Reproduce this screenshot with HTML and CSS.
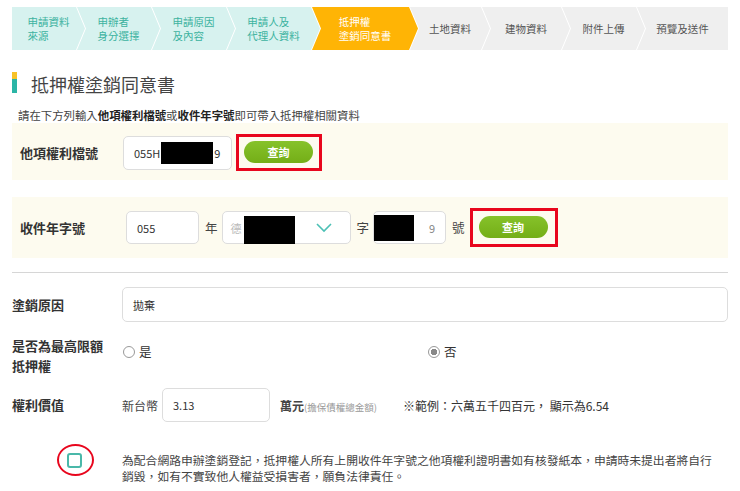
FILE: index.html
```html
<!DOCTYPE html>
<html lang="zh-Hant">
<head>
  <meta charset="UTF-8">
  <title>抵押權塗銷同意書</title>
  <link rel="stylesheet" href="styles.css">
</head>
<body>
  <div class="page">
    <ol class="steps">
      <li class="step done first"><span>申請資料<br>來源</span></li>
      <li class="step done"><span>申辦者<br>身分選擇</span></li>
      <li class="step done"><span>申請原因<br>及內容</span></li>
      <li class="step done"><span>申請人及<br>代理人資料</span></li>
      <li class="step active"><span>抵押權<br>塗銷同意書</span></li>
      <li class="step"><span>土地資料</span></li>
      <li class="step"><span>建物資料</span></li>
      <li class="step"><span>附件上傳</span></li>
      <li class="step last"><span>預覽及送件</span></li>
    </ol>

    <h2 class="title">抵押權塗銷同意書</h2>
    <p class="hint">請在下方列輸入<b>他項權利檔號</b>或<b>收件年字號</b>即可帶入抵押權相關資料</p>

    <div class="query">
      <span class="q-label">他項權利檔號</span>
      <div class="box box-no">055H<span class="mask mask-no"></span>9</div>
      <span class="mark"><button class="btn">查詢</button></span>
    </div>

    <div class="query query-second">
      <span class="q-label">收件年字號</span>
      <div class="box box-year">055</div>
      <span class="unit">年</span>
      <div class="box box-select">
        <span class="faint">德</span><span class="mask mask-sel"></span>
        <svg class="caret" width="16" height="10" viewBox="0 0 16 10"><polyline points="1,1 8,8 15,1" fill="none" stroke="#4cc0b5" stroke-width="1.6"/></svg>
      </div>
      <span class="unit">字</span>
      <div class="box box-num"><span class="mask mask-num"></span><span class="faint-nine">9</span></div>
      <span class="unit">號</span>
      <span class="mark mark-second"><button class="btn">查詢</button></span>
    </div>

    <hr class="divider">

    <div class="row">
      <span class="label">塗銷原因</span>
      <div class="box box-wide">拋棄</div>
    </div>

    <div class="row row-radio">
      <span class="label">是否為最高限額<br>抵押權</span>
      <div class="choices">
        <span class="choice"><span class="radio"></span>是</span>
        <span class="choice"><span class="radio on"></span>否</span>
      </div>
    </div>

    <div class="row row-money">
      <span class="label">權利價值</span>
      <span class="pre">新台幣</span>
      <div class="box box-money">3.13</div>
      <span class="money-unit">萬元<small>(擔保債權總金額)</small></span>
      <span class="example">※範例：六萬五千四百元， 顯示為6.54</span>
    </div>

    <div class="agree">
      <div class="check-cell">
        <span class="check"></span>
        <span class="circle"></span>
      </div>
      <p class="agree-text">為配合網路申辦塗銷登記，抵押權人所有上開收件年字號之他項權利證明書如有核發紙本，申請時未提出者將自行<br>銷毀，如有不實致他人權益受損害者，願負法律責任。</p>
    </div>
  </div>
</body>
</html>
```

FILE: styles.css
```css
body {
  margin: 0;
  background: #fff;
  color: #333;
  font-family: "Noto Sans CJK TC", "Noto Sans", sans-serif;
}

.page {
  width: 716px;
  padding: 7px 12px 0;
}

/* stepper */
.steps {
  display: flex;
  margin: 0;
  padding: 0;
  list-style: none;
  height: 43px;
}

.step {
  display: flex;
  align-items: center;
  justify-content: center;
  margin-left: -8px;
  background: #efefef;
  color: #555;
  font-size: 10.5px;
  line-height: 14px;
  clip-path: polygon(0 0, calc(100% - 9px) 0, 100% 50%, calc(100% - 9px) 100%, 0 100%, 9px 50%);
}

.step span {
  text-align: left;
}

.step.done {
  background: #d7f2ef;
  color: #3db3a0;
}

.step.active {
  background: #ffb405;
  color: #fff;
}

.step.first {
  margin-left: 0;
  clip-path: polygon(0 0, calc(100% - 9px) 0, 100% 50%, calc(100% - 9px) 100%, 0 100%);
}

.step.last {
  clip-path: polygon(0 0, 100% 0, 100% 100%, 0 100%, 9px 50%);
}

.step:nth-child(1) { width: 73px; }
.step:nth-child(2) { width: 83px; }
.step:nth-child(3) { width: 83px; }
.step:nth-child(4) { width: 93px; }
.step:nth-child(5) { width: 106px; }
.step:nth-child(6) { width: 80px; }
.step:nth-child(7) { width: 88px; }
.step:nth-child(8) { width: 83px; }
.step:nth-child(9) { width: 91px; }

/* title */
.title {
  margin: 22px 0 0;
  padding-left: 19px;
  position: relative;
  font-size: 18px;
  font-weight: 400;
  line-height: 24px;
  color: #444;
}

.title::before {
  content: "";
  position: absolute;
  left: 0;
  top: 0;
  width: 5px;
  height: 21px;
  background: linear-gradient(#f8c227 0, #f8c227 33%, #2bb5a6 33%);
}

.hint {
  margin: 11px 0 0 6px;
  font-size: 11.4px;
  line-height: 16px;
  color: #444;
}

.hint b {
  color: #222;
}

/* query blocks */
.query {
  display: flex;
  align-items: center;
  padding: 11px 8px 9px;
  background: #fdfbef;
}

.query-second {
  margin-top: 17px;
  padding: 11px 8px 11px;
}

.q-label {
  width: 103px;
  font-size: 13px;
  font-weight: 700;
  color: #333;
}

.query-second .q-label {
  width: 106px;
}

.box {
  display: flex;
  align-items: center;
  box-sizing: border-box;
  height: 34px;
  padding: 0 10px;
  background: #fff;
  border: 1px solid #ddd;
  border-radius: 5px;
  font-size: 11px;
  color: #333;
}

.box-no {
  width: 109px;
  margin-right: 4px;
}

.mask {
  display: inline-block;
  background: #000;
}

.mask-no {
  width: 52px;
  height: 22px;
  margin: 0 1px;
}

.box-year {
  width: 73px;
  height: 33px;
}

.unit {
  margin: 0 4px 0 6px;
  font-size: 12.5px;
  color: #444;
}

.box-select {
  position: relative;
  width: 129px;
  height: 33px;
  padding-left: 8px;
}

.faint {
  color: #bbb;
  margin-right: 2px;
}

.mask-sel {
  width: 51px;
  height: 28px;
  margin-top: 4px;
}

.caret {
  margin-left: auto;
  margin-right: 8px;
}

.box-num {
  width: 73px;
  height: 33px;
  padding-left: 0;
}

.mask-num {
  width: 42px;
  height: 26px;
}

.faint-nine {
  margin-left: 15px;
  color: #888;
}

.mark {
  padding: 4px 6px 5px 5px;
  border: 3px solid #e8061d;
}

.mark-second {
  margin-left: 1px;
  padding: 5px 7px 6px 6px;
}

.btn {
  display: block;
  width: 69px;
  height: 22px;
  border: 0;
  border-radius: 11px;
  background: linear-gradient(#86c22a, #74ae17);
  color: #fff;
  font-family: inherit;
  font-size: 11px;
  font-weight: 700;
  padding: 0;
}

.divider {
  margin: 14px 0 0;
  border: 0;
  border-top: 1px solid #d6d6d6;
}

/* form rows */
.row {
  display: flex;
  align-items: center;
  margin-top: 14px;
}

.label {
  width: 110px;
  flex: none;
  font-size: 13px;
  font-weight: 700;
  line-height: 20px;
  color: #333;
}

.box-wide {
  flex: 1;
  height: 35px;
}

.row-radio {
  margin-top: 14px;
  align-items: flex-start;
}

.choices {
  flex: 1;
  display: grid;
  grid-template-columns: 1fr 1fr;
  padding-top: 8px;
}

.choice {
  display: flex;
  align-items: center;
  font-size: 12.5px;
  line-height: 16px;
  color: #333;
}

.choice:first-child {
  padding-left: 1px;
}

.choice:last-child {
  padding-left: 3px;
}

.radio {
  box-sizing: border-box;
  width: 12px;
  height: 12px;
  margin-right: 4px;
  border: 1px solid #999;
  border-radius: 50%;
  background: #fff;
}

.radio.on {
  background: radial-gradient(circle, #888 0, #888 3px, #fff 3.5px);
}

.row-money {
  margin-top: 12px;
}

.pre {
  font-size: 12px;
  color: #444;
  margin-right: 4px;
}

.box-money {
  width: 108px;
  height: 34px;
}

.money-unit {
  margin-left: 10px;
  font-size: 12px;
  font-weight: 700;
  color: #444;
}

.money-unit small {
  font-size: 9.5px;
  font-weight: 400;
  color: #999;
}

.example {
  margin-left: 26px;
  font-size: 12px;
  color: #333;
}

/* agreement */
.agree {
  display: flex;
  margin-top: 30px;
}

.check-cell {
  position: relative;
  width: 110px;
  flex: none;
}

.check {
  display: block;
  box-sizing: border-box;
  width: 15px;
  height: 15px;
  margin: 1px 0 0 55px;
  border: 2px solid #4ab8a9;
  border-radius: 3px;
  background: #fff;
}

.circle {
  position: absolute;
  left: 45px;
  top: -8px;
  width: 37px;
  height: 32px;
  box-sizing: border-box;
  border: 2px solid #e8061d;
  border-radius: 50%;
}

.agree-text {
  margin: 0;
  font-size: 11.8px;
  line-height: 16px;
  color: #444;
}
```
